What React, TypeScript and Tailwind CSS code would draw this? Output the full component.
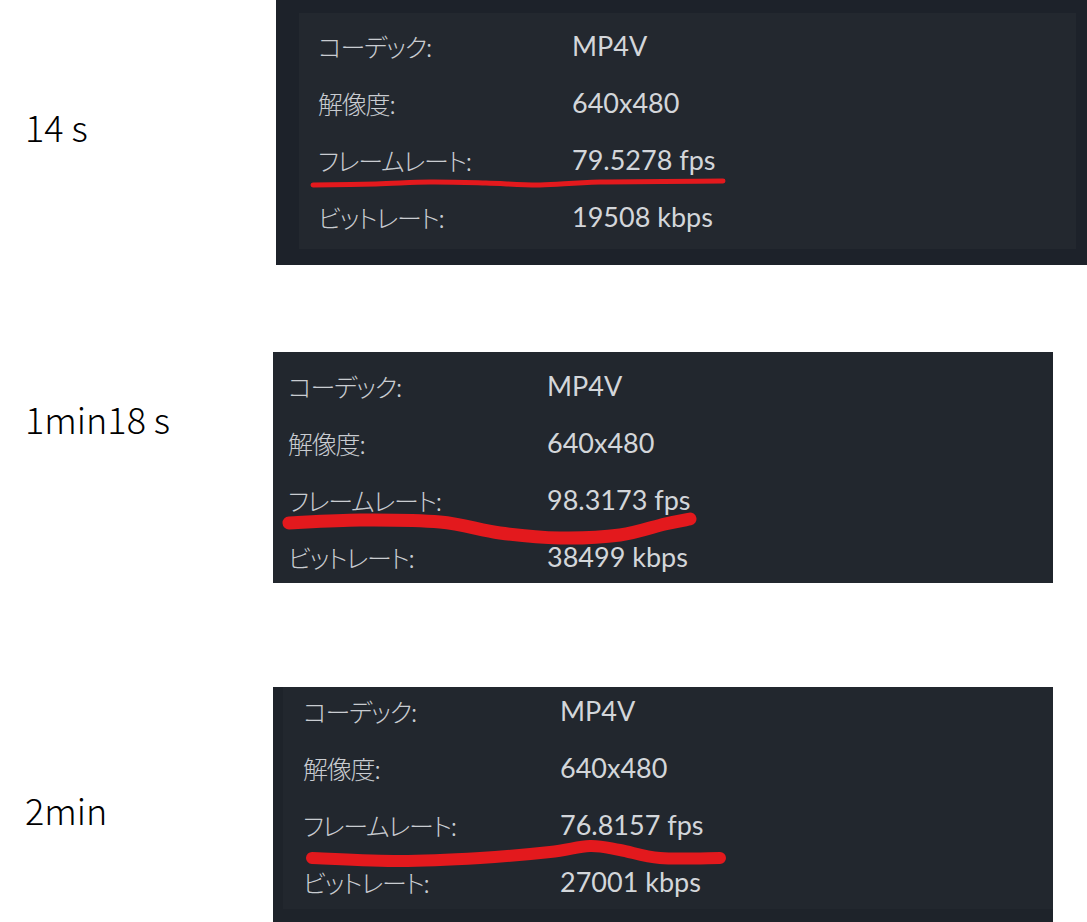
import React from 'react';

type Pt = [number, number];

interface Info {
  codec: string;
  res: string;
  fps: string;
  kbps: string;
}

const LABELS = ['コーデック:', '解像度:', 'フレームレート:', 'ビットレート:'];

// ラフな手書き線: catmull-rom → bezier
function smooth(pts: Pt[]): string {
  let d = `M${pts[0][0]},${pts[0][1]}`;
  for (let i = 0; i < pts.length - 1; i++) {
    const p0 = pts[i - 1] || pts[i];
    const p1 = pts[i];
    const p2 = pts[i + 1];
    const p3 = pts[i + 2] || p2;
    const c1: Pt = [p1[0] + (p2[0] - p0[0]) / 6, p1[1] + (p2[1] - p0[1]) / 6];
    const c2: Pt = [p2[0] - (p3[0] - p1[0]) / 6, p2[1] - (p3[1] - p1[1]) / 6];
    d += ` C${c1[0]},${c1[1]} ${c2[0]},${c2[1]} ${p2[0]},${p2[1]}`;
  }
  return d;
}

function Stroke({ pts, width }: { pts: Pt[]; width: number }) {
  return (
    <svg className="absolute inset-0 w-full h-full pointer-events-none overflow-visible">
      <path d={smooth(pts)} fill="none" stroke="#e3191d" strokeWidth={width} strokeLinecap="round" strokeLinejoin="round" />
    </svg>
  );
}

function Rows({ info, labelCol }: { info: Info; labelCol: string }) {
  const values = [info.codec, info.res, info.fps, info.kbps];
  return (
    <div className={`grid ${labelCol}`}>
      {LABELS.map((l, i) => (
        <React.Fragment key={l}>
          <div className="h-[57px] flex items-center text-[25px] text-[#c9ccd1] font-['Noto_Sans_CJK_JP',sans-serif] font-light [font-feature-settings:'palt'] tracking-[-1.2px]">
            {l}
          </div>
          <div className="h-[57px] flex items-center text-[27px] text-[#d3d6da] font-['Lato',sans-serif]">
            {values[i]}
          </div>
        </React.Fragment>
      ))}
    </div>
  );
}

function Time({ text, top }: { text: string; top: string }) {
  return (
    <div className={`pl-[25px] ${top} text-[36px] leading-none text-black font-light font-['Noto_Sans_CJK_JP',sans-serif]`}>
      {text}
    </div>
  );
}

export default function App() {
  return (
    <div className="w-[1087px] h-[922px] bg-white overflow-hidden">
      {/* 14 s */}
      <div className="flex h-[265px]">
        <div className="w-[276px] shrink-0">
          <Time text="14 s" top="pt-[108px]" />
        </div>
        <div className="relative flex-1 bg-[#1d222a] pl-[23px] pt-[13px] pr-[11px] pb-[16px]">
          <div className="h-full bg-[#23282f] pl-[19px] pt-[5px]">
            <Rows info={{ codec: 'MP4V', res: '640x480', fps: '79.5278 fps', kbps: '19508 kbps' }} labelCol="grid-cols-[254px_1fr]" />
          </div>
          <Stroke width={5} pts={[[37, 185], [100, 184], [154, 182], [210, 183], [264, 185], [324, 182], [447, 181]]} />
        </div>
      </div>

      {/* 1min18 s */}
      <div className="flex h-[231px] mt-[87px]">
        <div className="w-[273px] shrink-0">
          <Time text="1min18 s" top="pt-[48px]" />
        </div>
        <div className="relative w-[780px] bg-[#22272e] border-r-[3px] border-[#1f242b] pl-[15px] pt-[6px]">
          <Rows info={{ codec: 'MP4V', res: '640x480', fps: '98.3173 fps', kbps: '38499 kbps' }} labelCol="grid-cols-[259px_1fr]" />
          <Stroke width={13} pts={[[16, 171], [87, 168], [167, 170], [227, 181], [287, 186], [347, 183], [392, 172], [417, 167]]} />
        </div>
      </div>

      {/* 2min */}
      <div className="flex h-[235px] mt-[104px]">
        <div className="w-[273px] shrink-0">
          <Time text="2min" top="pt-[104px]" />
        </div>
        <div className="relative w-[780px] bg-[#1e232a] pl-[10px] pb-[9px] overflow-hidden">
          <div className="h-full bg-[#22272e] pl-[20px]">
            <div className="-mt-[4px]">
              <Rows info={{ codec: 'MP4V', res: '640x480', fps: '76.8157 fps', kbps: '27001 kbps' }} labelCol="grid-cols-[257px_1fr]" />
            </div>
          </div>
          <Stroke width={12} pts={[[39, 171], [127, 174], [207, 171], [277, 165], [317, 159], [347, 163], [387, 171], [447, 171]]} />
        </div>
      </div>
    </div>
  );
}
